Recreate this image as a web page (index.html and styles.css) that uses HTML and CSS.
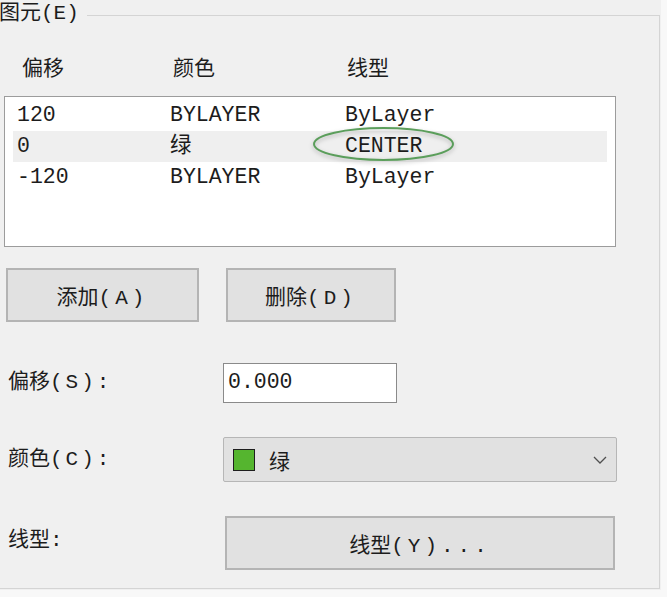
FILE: index.html
```html
<!DOCTYPE html>
<html lang="zh-CN">
<head>
<meta charset="utf-8">
<title>图元</title>
<link rel="stylesheet" href="styles.css">
</head>
<body>
<div class="panel">
<div class="group">
  <div class="group-title">图元(E)</div>
  <div class="cols-head"><span>偏移</span><span>颜色</span><span>线型</span></div>
  <div class="list">
    <div class="row"><span>120</span><span>BYLAYER</span><span>ByLayer</span></div>
    <div class="row sel"><span>0</span><span>绿</span><span>CENTER</span></div>
    <div class="row"><span>-120</span><span>BYLAYER</span><span>ByLayer</span></div>
    <svg class="mark" width="143" height="37" viewBox="0 0 143 37">
      <ellipse cx="71.5" cy="18" rx="69.5" ry="16" fill="none" stroke="#5b9e5b" stroke-width="2"/>
    </svg>
  </div>
  <div class="btns">
    <button class="btn add">添加<span class="key">(A)</span></button>
    <button class="btn del">删除<span class="key">(D)</span></button>
  </div>
  <div class="form">
    <div class="label">偏移<span class="key">(S):</span></div>
    <div class="input">0.000</div>
    <div class="label">颜色<span class="key">(C):</span></div>
    <div class="select">
      <span class="swatch"></span>
      <span class="sel-text">绿</span>
      <svg class="chev" width="14" height="8" viewBox="0 0 14 8"><polyline points="1,1 7,7 13,1" fill="none" stroke="#505050" stroke-width="1.3"/></svg>
    </div>
    <div class="label lt">线型:</div>
    <button class="btn wide">线型<span class="key">(Y)...</span></button>
  </div>
</div>
</div>
</body>
</html>
```

FILE: styles.css
```css
html, body {
  margin: 0;
  padding: 0;
  background: #f8f8f8;
}
body {
  width: 667px;
  height: 597px;
  overflow: hidden;
  font-family: "Liberation Mono", "Noto Sans CJK SC", monospace;
  font-size: 21px;
  color: #1c1c1c;
}
.panel {
  width: 661px;
  height: 590px;
  padding-top: 15px;
  box-sizing: border-box;
  background: #f0f0f0;
}
.group {
  position: relative;
  box-sizing: border-box;
  width: 660px;
  height: 574px;
  border: 1px solid #d4d4d4;
  border-left: none;
}
.group-title {
  position: absolute;
  left: -1px;
  top: -14px;
  line-height: 24px;
  padding-right: 8px;
  background: #f0f0f0;
}
.cols-head {
  margin-top: 42px;
  padding-left: 22px;
  line-height: 24px;
  display: grid;
  grid-template-columns: 151px 174px auto;
}
.list {
  position: relative;
  box-sizing: border-box;
  margin: 14px 0 0 4px;
  width: 612px;
  height: 151px;
  background: #fff;
  border: 1px solid #9c9c9c;
  padding-top: 3px;
}
.row {
  display: grid;
  grid-template-columns: 153px 175px auto;
  height: 31px;
  line-height: 31px;
  margin: 0 8px;
  padding-left: 4px;
  font-size: 21.5px;
}
.row.sel {
  background: #efefef;
}
.mark {
  position: absolute;
  left: 307px;
  top: 29px;
  overflow: visible;
  filter: drop-shadow(0 2px 2px rgba(0,0,0,0.25));
}
.btns {
  display: flex;
  gap: 27px;
  margin-top: 21px;
  padding-left: 6px;
}
.btn {
  box-sizing: border-box;
  height: 54px;
  background: #e1e1e1;
  border: 2px solid #b4b4b4;
  font: inherit;
  color: #1c1c1c;
  padding: 0;
}
.btn.add { width: 193px; }
.btn.del { width: 170px; }
.key { letter-spacing: 3px; }
.btn .key { letter-spacing: 4px; }
.form {
  margin-top: 41px;
  padding-left: 8px;
  display: grid;
  grid-template-columns: 215px auto;
  row-gap: 34px;
  align-items: center;
}
.label {
  line-height: 24px;
}
.label.lt {
  margin-top: -4px;
}
.input {
  box-sizing: border-box;
  width: 174px;
  height: 40px;
  background: #fff;
  border: 1px solid #8a8a8a;
  padding-left: 4px;
  line-height: 37px;
  font-size: 21.5px;
}
.select {
  box-sizing: border-box;
  width: 394px;
  height: 45px;
  background: #e1e1e1;
  border: 1px solid #b6b6b6;
  border-radius: 2px;
  display: flex;
  align-items: center;
  padding: 0 9px;
}
.swatch {
  box-sizing: border-box;
  width: 22px;
  height: 22px;
  background: #55b52f;
  border: 1px solid #1e1e1e;
}
.sel-text {
  margin-left: 14px;
}
.chev {
  margin-left: auto;
}
.btn.wide {
  width: 390px;
  margin-left: 2px;
}
```
